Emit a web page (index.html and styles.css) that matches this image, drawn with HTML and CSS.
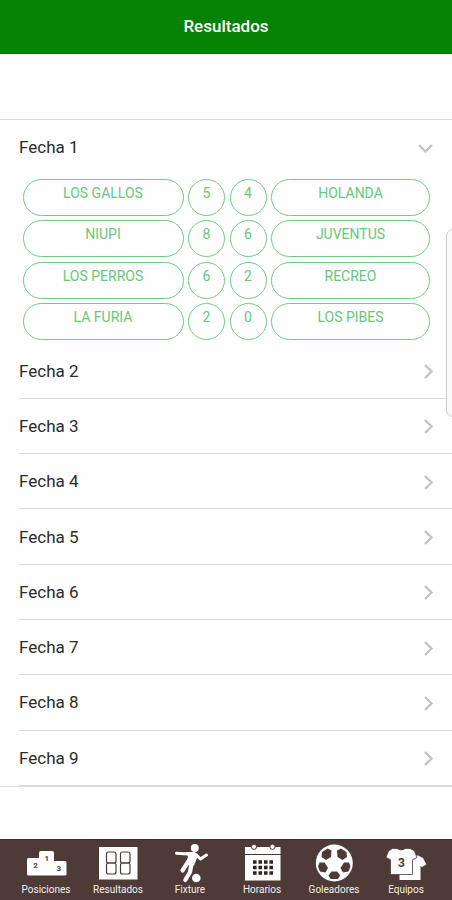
FILE: index.html
```html
<!DOCTYPE html>
<html lang="es">
<head>
<meta charset="utf-8">
<title>Resultados</title>
<link rel="stylesheet" href="styles.css">
</head>
<body>
<div class="app">
  <header class="header">Resultados</header>
  <main class="content">
    <section class="list">
      <div class="row row-open"><span>Fecha 1</span>
        <svg class="chevron-down" viewBox="0 0 17 11"><path d="M2 2l6.500 6.500L15 2"/></svg></div>
      <div class="matches">
        <span class="pill">LOS GALLOS</span><span class="pill">5</span><span class="pill">4</span><span class="pill">HOLANDA</span>
        <span class="pill">NIUPI</span><span class="pill">8</span><span class="pill">6</span><span class="pill">JUVENTUS</span>
        <span class="pill">LOS PERROS</span><span class="pill">6</span><span class="pill">2</span><span class="pill">RECREO</span>
        <span class="pill">LA FURIA</span><span class="pill">2</span><span class="pill">0</span><span class="pill">LOS PIBES</span>
      </div>
      <div class="row"><span>Fecha 2</span><svg class="chevron" viewBox="0 0 11 17"><path d="M2 2l6.500 6.500L2 15"/></svg></div>
      <div class="row"><span>Fecha 3</span><svg class="chevron" viewBox="0 0 11 17"><path d="M2 2l6.500 6.500L2 15"/></svg></div>
      <div class="row"><span>Fecha 4</span><svg class="chevron" viewBox="0 0 11 17"><path d="M2 2l6.500 6.500L2 15"/></svg></div>
      <div class="row"><span>Fecha 5</span><svg class="chevron" viewBox="0 0 11 17"><path d="M2 2l6.500 6.500L2 15"/></svg></div>
      <div class="row"><span>Fecha 6</span><svg class="chevron" viewBox="0 0 11 17"><path d="M2 2l6.500 6.500L2 15"/></svg></div>
      <div class="row"><span>Fecha 7</span><svg class="chevron" viewBox="0 0 11 17"><path d="M2 2l6.500 6.500L2 15"/></svg></div>
      <div class="row"><span>Fecha 8</span><svg class="chevron" viewBox="0 0 11 17"><path d="M2 2l6.500 6.500L2 15"/></svg></div>
      <div class="row"><span>Fecha 9</span><svg class="chevron" viewBox="0 0 11 17"><path d="M2 2l6.500 6.500L2 15"/></svg></div>
    </section>
  </main>
  <nav class="tabs">
    <div class="tab">
      <svg viewBox="0 0 72 43"><path class="fill" d="M18.500 18H29v-5q0-2 2-2h11q2 0 2 2v8h11q1.500 0 1.500 1.500V34q0 1.500-1.500 1.500H18.500Q17 35.500 17 34V19.500Q17 18 18.500 18z"/>
        <text x="25.500" y="28">2</text><text x="36.700" y="20.500">1</text><text x="48.700" y="31">3</text></svg>
      <span>Posiciones</span>
    </div>
    <div class="tab">
      <svg viewBox="0 0 72 43"><path class="fill" d="M17 7h38.500v32.500H17z"/>
        <g class="digit"><rect x="24.500" y="12" width="9.500" height="11" rx="2"/><rect x="24.500" y="23" width="9.500" height="11" rx="2"/><rect x="38.500" y="12" width="9.500" height="11" rx="2"/><rect x="38.500" y="23" width="9.500" height="11" rx="2"/></g></svg>
      <span>Resultados</span>
    </div>
    <div class="tab">
      <svg viewBox="0 0 72 43"><circle class="fill" cx="40.800" cy="7.900" r="4"/><circle class="fill" cx="42.300" cy="38" r="4.300"/>
        <path class="fill" d="M32 12h9l3 3.500-4 10-9-.5 3-8z"/>
        <path class="limb" d="M22.500 13.200l11 .8M42 14.500l4.500 4.500 6-4"/>
        <path class="leg" d="M34 22l-5.500 8.500M37.500 24l-1.500 8-4.700 8"/></svg>
      <span>Fixture</span>
    </div>
    <div class="tab">
      <svg viewBox="0 0 72 43"><path class="fill" d="M19 7h35.500v33.500H19z"/><path class="cut" d="M19 14.500h36"/><circle class="ring" cx="28" cy="6.800" r="2.600"/><circle class="ring" cx="46.500" cy="6.800" r="2.600"/>
        <path class="dots" d="M27 22h20M27 27.500h20M27 33h20"/></svg>
      <span>Horarios</span>
    </div>
    <div class="tab">
      <svg viewBox="0 0 72 43"><circle class="fill" cx="36.300" cy="23" r="18.500"/>
        <path class="dark" d="M29.500 8.500l4 2-.5 6.500-5 3-4.500-3 .5-5zM43 8.500l-4 2 .5 6.500 5 3 4.500-3-.5-5zM21.500 22.500l5 0 3.500 5.500-2.500 4.500-5.500-1-2-5zM51 22.500l-5 0-3.500 5.500 2.500 4.500 5.500-1 2-5zM33.500 31.500h5.700l3 4-2.200 3.500h-7.300l-2.200-3.500z"/></svg>
      <span>Goleadores</span>
    </div>
    <div class="tab">
      <svg viewBox="0 0 72 43"><path class="fill" d="M42 15.500h6l5 2.500 3.300 6.500-4.300 2.500-1.500-1V40H29.500V32z"/><path class="shirt" d="M22.500 8.500h4.500q4.300 3 8.500 0H40l4.500 2.500 2.500 6.500-4.500 2.200V34.500H20.500V19.700L16 17.500 18.500 11z"/><text class="number" x="31.500" y="26.500">3</text></svg>
      <span>Equipos</span>
    </div>
  </nav>
  <div class="edge-handle"></div>
</div>
</body>
</html>
```
FILE: styles.css
```css
* { box-sizing: border-box; }
body { margin: 0; background: #fefefe; font-family: Roboto, sans-serif; }
.app { position: relative; display: flex; flex-direction: column; height: 900px; overflow: hidden; }
.header { height: 54px; flex: none; background: #048204; color: #fff; font-size: 17px; font-weight: 500; line-height: 53px; text-align: center; border-bottom: 1px solid #067506; }
.content { flex: 1; padding-top: 65px; }
.list { border-top: 1px solid #d9d9d9; border-bottom: 1px solid #dedede; height: 668px; }
.row { display: flex; align-items: center; justify-content: space-between; height: 55.3px; margin-left: 19px; padding-right: 18px; border-bottom: 1px solid #dadada; color: #2b2b2b; font-size: 17px; }
.row-open { border: 0; height: 54px; }
.chevron { width: 11px; height: 17px; margin-top: 2px; fill: none; stroke: #c4c4c4; stroke-width: 2.400; }
.chevron-down { width: 17px; height: 11px; margin-top: 3px; fill: none; stroke: #c4c4c4; stroke-width: 2.400; }
.matches { display: grid; grid-template-columns: 161px 37px 37px 159px; grid-auto-rows: 37px; gap: 4.500px; padding: 4.500px 22px 0 22.500px; height: 169.500px; }
.pill { border: 1.500px solid #72ca84; border-radius: 19px; color: #67c87a; font-size: 14px; line-height: 26px; text-align: center; }
.tabs { display: flex; flex: none; height: 61px; padding: 0 10px; background: #4e3b37; border-top: 1px solid #3e2c29; }
.tab { display: flex; flex-direction: column; width: 72px; align-items: center; color: #f3eeec; font-size: 10px; line-height: 14px; }
.tab svg { display: block; width: 72px; height: 43px; }
.tab text { font-size: 8px; font-weight: 700; text-anchor: middle; fill: #4e3b37; }
.tab .number { font-size: 12px; }
.fill { fill: #fff; }
.dark { fill: #4e3b37; }
.digit { fill: none; stroke: #4e3b37; stroke-width: 1.200; }
.limb { fill: none; stroke: #fff; stroke-width: 3; stroke-linecap: round; stroke-linejoin: round; }
.leg { fill: none; stroke: #fff; stroke-width: 4.200; stroke-linecap: round; stroke-linejoin: round; }
.cut { stroke: #4e3b37; stroke-width: 1; }
.ring { fill: #fff; stroke: #4e3b37; stroke-width: 1; }
.dots { stroke: #32221f; stroke-width: 3.600; stroke-dasharray: 3.600 1.870; }
.shirt { fill: #fff; stroke: #4e3b37; stroke-width: .8; }
.edge-handle { position: absolute; left: 446px; top: 229px; width: 16px; height: 188px; border: 1px solid #ccc; border-radius: 7px; background: #fafafa; }
```
